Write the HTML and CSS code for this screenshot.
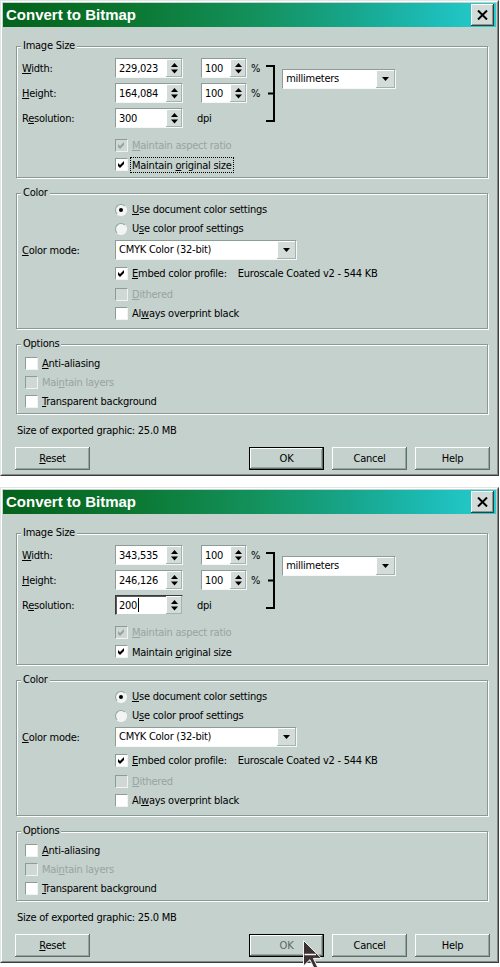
FILE: index.html
```html
<!DOCTYPE html>
<html>
<head>
<meta charset="utf-8">
<title>Convert to Bitmap</title>
<link rel="stylesheet" href="styles.css">
</head>
<body>

<div class="dialog">
  <div class="frame">
    <div class="titlebar">
      <span class="title">Convert to Bitmap</span>
      <span class="close"><svg width="11" height="10" viewBox="0 0 11 10"><path d="M1 0.5 L10 9.5 M10 0.5 L1 9.5" stroke="#000" stroke-width="2"/></svg></span>
    </div>
    <div class="content">
      <div class="group">
        <div class="gtitle">Image Size</div>
        <div class="size-body">
          <div class="size-rows">
            <div class="row">
              <span class="lbl"><u>W</u>idth:</span>
              <div class="spin v-val"><span class="field">229,023</span><span class="spinbtn"><svg width="7" height="11" viewBox="0 0 7 11"><path d="M3.5 0 L7 4 L0 4 Z M0 6.5 L7 6.5 L3.5 10.5 Z" fill="#000"/></svg></span></div>
              <div class="spin v-pct"><span class="field">100</span><span class="spinbtn"><svg width="7" height="11" viewBox="0 0 7 11"><path d="M3.5 0 L7 4 L0 4 Z M0 6.5 L7 6.5 L3.5 10.5 Z" fill="#000"/></svg></span></div>
              <span class="pct">%</span>
            </div>
            <div class="row">
              <span class="lbl"><u>H</u>eight:</span>
              <div class="spin v-val"><span class="field">164,084</span><span class="spinbtn"><svg width="7" height="11" viewBox="0 0 7 11"><path d="M3.5 0 L7 4 L0 4 Z M0 6.5 L7 6.5 L3.5 10.5 Z" fill="#000"/></svg></span></div>
              <div class="spin v-pct"><span class="field">100</span><span class="spinbtn"><svg width="7" height="11" viewBox="0 0 7 11"><path d="M3.5 0 L7 4 L0 4 Z M0 6.5 L7 6.5 L3.5 10.5 Z" fill="#000"/></svg></span></div>
              <span class="pct">%</span>
            </div>
            <div class="row">
              <span class="lbl">R<u>e</u>solution:</span>
              <div class="spin v-val"><span class="field">300</span><span class="spinbtn"><svg width="7" height="11" viewBox="0 0 7 11"><path d="M3.5 0 L7 4 L0 4 Z M0 6.5 L7 6.5 L3.5 10.5 Z" fill="#000"/></svg></span></div>
              <span class="dpi">dpi</span>
            </div>
          </div>
          <svg class="bracket" width="10" height="59" viewBox="0 0 10 59"><path d="M1 2 H9 M9 1 V58 M1 57 H9 M3 29.5 H9" stroke="#000" stroke-width="2" fill="none"/></svg>
          <div class="combo c-units"><span class="ctext">millimeters</span><span class="cbtn"><svg width="7" height="4" viewBox="0 0 7 4"><path d="M0 0 H7 L3.5 4 Z" fill="#000"/></svg></span></div>
        </div>
        <div class="checks size-checks">
          <div class="check disabled"><span class="box"><svg width="7" height="7" viewBox="0 0 7 7"><path d="M0 2 L2 4 L6 0 L6 3 L2 7 L0 5 Z" fill="#97a39f"/></svg></span><span class="text"><u>M</u>aintain aspect ratio</span></div>
          <div class="check"><span class="box"><svg width="7" height="7" viewBox="0 0 7 7"><path d="M0 2 L2 4 L6 0 L6 3 L2 7 L0 5 Z" fill="#000"/></svg></span><span class="text focus">Maintain <u>o</u>riginal size</span></div>
        </div>
      </div>

      <div class="group g-color">
        <div class="gtitle">Color</div>
        <div class="color-body">
          <div class="check radio-row"><span class="radio on"></span><span class="text"><u>U</u>se document color settings</span></div>
          <div class="check radio-row"><span class="radio"></span><span class="text">U<u>s</u>e color proof settings</span></div>
          <div class="row mode-row">
            <span class="lbl"><u>C</u>olor mode:</span>
            <div class="combo c-mode"><span class="ctext">CMYK Color (32-bit)</span><span class="cbtn"><svg width="7" height="4" viewBox="0 0 7 4"><path d="M0 0 H7 L3.5 4 Z" fill="#000"/></svg></span></div>
          </div>
          <div class="check indent embed"><span class="box"><svg width="7" height="7" viewBox="0 0 7 7"><path d="M0 2 L2 4 L6 0 L6 3 L2 7 L0 5 Z" fill="#000"/></svg></span><span class="text"><u>E</u>mbed color profile:</span><span class="profile">Euroscale Coated v2 - 544 KB</span></div>
          <div class="check indent disabled dith"><span class="box"></span><span class="text"><u>D</u>ithered</span></div>
          <div class="check indent"><span class="box"></span><span class="text">Al<u>w</u>ays overprint black</span></div>
        </div>
      </div>

      <div class="group g-options">
        <div class="gtitle">Options</div>
        <div class="checks opt-checks">
          <div class="check"><span class="box"></span><span class="text"><u>A</u>nti-aliasing</span></div>
          <div class="check disabled"><span class="box"></span><span class="text">Mai<u>n</u>tain layers</span></div>
          <div class="check"><span class="box"></span><span class="text"><u>T</u>ransparent background</span></div>
        </div>
      </div>

      <div class="sizeinfo">Size of exported graphic: 25.0 MB</div>

      <div class="buttons">
        <span class="btn"><span><u>R</u>eset</span></span>
        <span class="spacer"></span>
        <span class="btn default">OK</span>
        <span class="btn">Cancel</span>
        <span class="btn">Help</span>
      </div>
    </div>
  </div>
</div>

<div class="dialog">
  <div class="frame">
    <div class="titlebar">
      <span class="title">Convert to Bitmap</span>
      <span class="close"><svg width="11" height="10" viewBox="0 0 11 10"><path d="M1 0.5 L10 9.5 M10 0.5 L1 9.5" stroke="#000" stroke-width="2"/></svg></span>
    </div>
    <div class="content">
      <div class="group">
        <div class="gtitle">Image Size</div>
        <div class="size-body">
          <div class="size-rows">
            <div class="row">
              <span class="lbl"><u>W</u>idth:</span>
              <div class="spin v-val"><span class="field">343,535</span><span class="spinbtn"><svg width="7" height="11" viewBox="0 0 7 11"><path d="M3.5 0 L7 4 L0 4 Z M0 6.5 L7 6.5 L3.5 10.5 Z" fill="#000"/></svg></span></div>
              <div class="spin v-pct"><span class="field">100</span><span class="spinbtn"><svg width="7" height="11" viewBox="0 0 7 11"><path d="M3.5 0 L7 4 L0 4 Z M0 6.5 L7 6.5 L3.5 10.5 Z" fill="#000"/></svg></span></div>
              <span class="pct">%</span>
            </div>
            <div class="row">
              <span class="lbl"><u>H</u>eight:</span>
              <div class="spin v-val"><span class="field">246,126</span><span class="spinbtn"><svg width="7" height="11" viewBox="0 0 7 11"><path d="M3.5 0 L7 4 L0 4 Z M0 6.5 L7 6.5 L3.5 10.5 Z" fill="#000"/></svg></span></div>
              <div class="spin v-pct"><span class="field">100</span><span class="spinbtn"><svg width="7" height="11" viewBox="0 0 7 11"><path d="M3.5 0 L7 4 L0 4 Z M0 6.5 L7 6.5 L3.5 10.5 Z" fill="#000"/></svg></span></div>
              <span class="pct">%</span>
            </div>
            <div class="row">
              <span class="lbl">R<u>e</u>solution:</span>
              <div class="spin v-val focused"><span class="field">200<span class="caret"></span></span><span class="spinbtn"><svg width="7" height="11" viewBox="0 0 7 11"><path d="M3.5 0 L7 4 L0 4 Z M0 6.5 L7 6.5 L3.5 10.5 Z" fill="#000"/></svg></span></div>
              <span class="dpi">dpi</span>
            </div>
          </div>
          <svg class="bracket" width="10" height="59" viewBox="0 0 10 59"><path d="M1 2 H9 M9 1 V58 M1 57 H9 M3 29.5 H9" stroke="#000" stroke-width="2" fill="none"/></svg>
          <div class="combo c-units"><span class="ctext">millimeters</span><span class="cbtn"><svg width="7" height="4" viewBox="0 0 7 4"><path d="M0 0 H7 L3.5 4 Z" fill="#000"/></svg></span></div>
        </div>
        <div class="checks size-checks">
          <div class="check disabled"><span class="box"><svg width="7" height="7" viewBox="0 0 7 7"><path d="M0 2 L2 4 L6 0 L6 3 L2 7 L0 5 Z" fill="#97a39f"/></svg></span><span class="text"><u>M</u>aintain aspect ratio</span></div>
          <div class="check"><span class="box"><svg width="7" height="7" viewBox="0 0 7 7"><path d="M0 2 L2 4 L6 0 L6 3 L2 7 L0 5 Z" fill="#000"/></svg></span><span class="text nofocus">Maintain <u>o</u>riginal size</span></div>
        </div>
      </div>

      <div class="group g-color">
        <div class="gtitle">Color</div>
        <div class="color-body">
          <div class="check radio-row"><span class="radio on"></span><span class="text"><u>U</u>se document color settings</span></div>
          <div class="check radio-row"><span class="radio"></span><span class="text">U<u>s</u>e color proof settings</span></div>
          <div class="row mode-row">
            <span class="lbl"><u>C</u>olor mode:</span>
            <div class="combo c-mode"><span class="ctext">CMYK Color (32-bit)</span><span class="cbtn"><svg width="7" height="4" viewBox="0 0 7 4"><path d="M0 0 H7 L3.5 4 Z" fill="#000"/></svg></span></div>
          </div>
          <div class="check indent embed"><span class="box"><svg width="7" height="7" viewBox="0 0 7 7"><path d="M0 2 L2 4 L6 0 L6 3 L2 7 L0 5 Z" fill="#000"/></svg></span><span class="text"><u>E</u>mbed color profile:</span><span class="profile">Euroscale Coated v2 - 544 KB</span></div>
          <div class="check indent disabled dith"><span class="box"></span><span class="text"><u>D</u>ithered</span></div>
          <div class="check indent"><span class="box"></span><span class="text">Al<u>w</u>ays overprint black</span></div>
        </div>
      </div>

      <div class="group g-options">
        <div class="gtitle">Options</div>
        <div class="checks opt-checks">
          <div class="check"><span class="box"></span><span class="text"><u>A</u>nti-aliasing</span></div>
          <div class="check disabled"><span class="box"></span><span class="text">Mai<u>n</u>tain layers</span></div>
          <div class="check"><span class="box"></span><span class="text"><u>T</u>ransparent background</span></div>
        </div>
      </div>

      <div class="sizeinfo">Size of exported graphic: 25.0 MB</div>

      <div class="buttons">
        <span class="btn"><span><u>R</u>eset</span></span>
        <span class="spacer"></span>
        <span class="btn default hover">OK
          <svg class="pointer" width="21" height="31" viewBox="0 0 21 31"><path d="M0.5 0.5 L0.5 26 L6.9 19.7 L11.7 29.8 L15.2 28.2 L10.4 18.4 L18.6 18.4 Z" fill="#3b3132" stroke="#f4f4f4" stroke-width="1"/><path d="M1.5 14.5 H13" stroke="#f4f4f4" stroke-width="1.5"/></svg>
        </span>
        <span class="btn">Cancel</span>
        <span class="btn">Help</span>
      </div>
    </div>
  </div>
</div>

</body>
</html>
```

FILE: styles.css
```css
* { box-sizing: border-box; }

html, body {
  margin: 0;
  padding: 0;
  background: #ffffff;
}

body {
  width: 500px;
  height: 967px;
  overflow: hidden;
  font-family: "DejaVu Sans Condensed", "Liberation Sans", sans-serif;
  font-size: 11px;
  letter-spacing: -0.25px;
  color: #000;
}

u { text-underline-offset: 1px; }

.dialog {
  width: 499px;
  height: 476px;
  background: #c5d1cd;
  border: 1px solid;
  border-color: #dfe6e3 #3c3c3c #3c3c3c #dfe6e3;
  display: flex;
  flex-direction: column;
}

.dialog + .dialog { margin-top: 11px; }

.frame {
  flex: 1;
  display: flex;
  flex-direction: column;
  border: 1px solid;
  border-color: #ffffff #7f8c88 #7f8c88 #ffffff;
  padding: 1px;
}

.titlebar {
  height: 24px;
  flex: none;
  display: flex;
  align-items: center;
  justify-content: space-between;
  padding: 0 2px 0 3px;
  background: linear-gradient(to right, #04621b 0%, #0b7630 25%, #13905a 50%, #17a58a 70%, #1dbdb8 88%, #25cece 100%);
}

.title {
  color: #ffffff;
  font-family: "Liberation Sans", Arial, sans-serif;
  font-weight: bold;
  font-size: 15px;
  line-height: 18px;
  letter-spacing: 0;
}

.close {
  width: 23px;
  height: 22px;
  display: flex;
  align-items: center;
  justify-content: center;
  background: #d2dbd8;
  box-shadow: inset -1px -1px #3c3c3c, inset 1px 1px #ffffff, inset -2px -2px #8a9793;
}

.content {
  flex: 1;
  display: flex;
  flex-direction: column;
  padding: 19px 8px 3px 13px;
}

.group {
  border: 1px solid #8a9995;
  box-shadow: inset 1px 1px 0 #ffffff, 1px 1px 0 #ffffff;
}

.gtitle {
  width: max-content;
  height: 14px;
  line-height: 14px;
  margin: -8px 0 0 4px;
  padding: 0 2px;
  background: #c5d1cd;
}

/* Image size */
.size-body {
  display: flex;
  margin: 5px 0 0 5px;
}

.size-rows {
  display: flex;
  flex-direction: column;
  gap: 5px;
}

.row {
  display: flex;
  align-items: center;
  height: 20px;
}

.lbl { width: 93px; flex: none; }

.spin {
  display: flex;
  height: 20px;
  border: 1px solid;
  border-color: #8e9c98 #f6f8f7 #f6f8f7 #8e9c98;
  background: #ffffff;
}

.spin.focused {
  border-color: #3a3a3a #c5d1cd #c5d1cd #3a3a3a;
  box-shadow: inset 1px 1px 0 #5a5a5a;
}

.v-val { width: 68px; }
.v-pct { width: 46px; margin-left: 18px; }

.field {
  flex: 1;
  padding-left: 3px;
  line-height: 17px;
  display: flex;
  align-items: center;
}

.caret {
  display: inline-block;
  width: 1px;
  height: 14px;
  background: #000;
  margin-left: 1px;
}

.spinbtn {
  width: 16px;
  flex: none;
  display: flex;
  align-items: center;
  justify-content: center;
  background: #d3dcd9;
  box-shadow: inset -1px -1px #a6b2ae, inset 1px 1px #ffffff;
}

.pct { margin-left: 4px; }
.dpi { margin-left: 14px; }

.bracket {
  flex: none;
  margin: 6px 0 0 5px;
}

.combo {
  display: flex;
  height: 20px;
  border: 1px solid;
  border-color: #8e9c98 #f6f8f7 #f6f8f7 #8e9c98;
  background: #ffffff;
}

.ctext {
  flex: 1;
  padding-left: 3px;
  line-height: 18px;
}

.cbtn {
  width: 19px;
  flex: none;
  display: flex;
  align-items: center;
  justify-content: center;
  background: #d3dcd9;
  box-shadow: inset -1px -1px #a6b2ae, inset 1px 1px #ffffff;
}

.c-units {
  width: 114px;
  margin: 11px 0 0 7px;
}

.c-mode { width: 182px; }

/* checks */
.checks {
  display: flex;
  flex-direction: column;
}

.size-checks { margin: 8px 0 3px 98px; }

.check {
  display: flex;
  align-items: center;
  height: 19px;
  gap: 4px;
}

.box {
  width: 13px;
  height: 13px;
  flex: none;
  display: flex;
  align-items: center;
  justify-content: center;
  background: #ffffff;
  border: 1px solid;
  border-color: #8e9c98 #f0f3f2 #f0f3f2 #8e9c98;
}

.disabled .box { background: #cfd8d5; }
.disabled .text { color: #98a4a0; }

.focus {
  outline: 1px dotted #000;
  margin-left: -1px;
  padding: 1px 1px 0 1px;
  line-height: 13px;
}

.nofocus {
  margin-left: -1px;
  padding: 1px 1px 0 1px;
  line-height: 13px;
}

/* color */
.color-body {
  display: flex;
  flex-direction: column;
  padding: 0 0 5px 0;
}

.radio-row { margin-left: 98px; gap: 5px; }

.radio {
  width: 12px;
  height: 12px;
  flex: none;
  border-radius: 50%;
  border: 1px solid;
  border-color: #95a29e #f4f6f5 #f4f6f5 #95a29e;
  background: #f2f5f4;
  display: flex;
  align-items: center;
  justify-content: center;
}

.radio.on::after {
  content: "";
  width: 4px;
  height: 4px;
  border-radius: 50%;
  background: #000;
}

.mode-row { margin: 2px 0 0 5px; }

.indent { margin-left: 98px; }
.embed { margin-top: 4px; }
.dith { margin-top: 2px; }

.profile { margin-left: 7px; }

.g-color { margin-top: 15px; }

/* options */
.g-options { margin-top: 15px; }

.opt-checks { margin: 3px 0 2px 8px; }

.sizeinfo {
  margin: 10px 0 0 1px;
  line-height: 14px;
}

.buttons {
  display: flex;
  gap: 8px;
  margin: 9px -2px 0 -1px;
}

.spacer { flex: 1; }

.btn {
  position: relative;
  width: 75px;
  height: 23px;
  display: flex;
  align-items: center;
  justify-content: center;
  background: #c5d1cd;
  box-shadow: inset -1px -1px #5f6c68, inset 1px 1px #ffffff, inset -2px -2px #97a4a0;
}

.btn.default {
  border: 1px solid #000;
}

.btn.hover { color: #5a6662; }

.pointer {
  position: absolute;
  left: 53px;
  top: 5px;
}
```
